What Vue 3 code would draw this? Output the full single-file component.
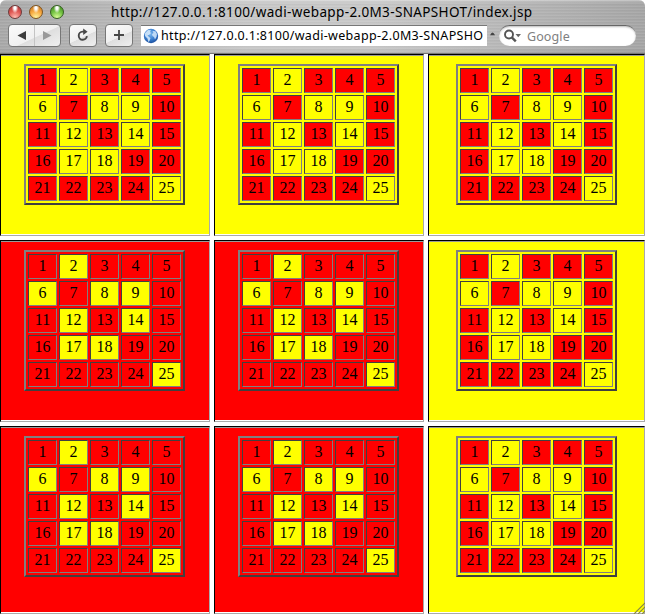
<script setup>
const litNumbers = new Set([2, 6, 8, 9, 12, 14, 17, 18, 25])
const cells = Array.from({ length: 25 }, (_, i) => i + 1)
const panes = ['yellow', 'yellow', 'yellow', 'red', 'red', 'yellow', 'red', 'red', 'yellow']
</script>

<template>
  <div class="window">
    <header class="chrome">
      <div class="titlebar">
        <div class="lights"><i class="light close"></i><i class="light mini"></i><i class="light zoom"></i></div>
        <div class="title">http://127.0.0.1:8100/wadi-webapp-2.0M3-SNAPSHOT/index.jsp</div>
      </div>
      <div class="toolbar">
        <div class="button history">
          <svg width="51" height="21" viewBox="0 0 51 21">
            <path d="M8.5 10.5L17 6V15Z" fill="#3c3c3c" />
            <path d="M25.5 0V21" stroke="#c4c4c4" />
            <path d="M42.5 10.5L34 6V15Z" fill="#999" />
          </svg>
        </div>
        <div class="button">
          <svg width="26" height="21" viewBox="0 0 26 21">
            <path d="M14 6.6H12.6A4.1 4.1 0 1 0 16.9 11.2" fill="none" stroke="#484848" stroke-width="1.9" />
            <path d="M13.2 3.4L17.6 6.7L13.2 10Z" fill="#484848" />
          </svg>
        </div>
        <div class="button">
          <svg width="26" height="21" viewBox="0 0 26 21"><path d="M13 5V15M8 10H18" stroke="#484848" stroke-width="1.8" /></svg>
        </div>
        <div class="address">
          <svg class="globe" width="16" height="16" viewBox="0 0 16 16">
            <defs>
              <radialGradient id="sea" cx="45%" cy="35%" r="65%">
                <stop offset="0" stop-color="#7db8ee" /><stop offset=".6" stop-color="#3a7fd0" /><stop offset="1" stop-color="#1c4f9e" />
              </radialGradient>
            </defs>
            <circle cx="8" cy="8" r="7.2" fill="url(#sea)" />
            <path d="M2 5L5 2L8 2.3L7 4L8 5L6 7L4.5 7.3L6 9L7.5 10L6.5 13L5.3 14L4.5 10.5L2 8Z" fill="#d9ebfb" opacity=".85" />
            <path d="M9.5 3L12.5 3.3L14 6L13.6 8.8L12 11.5L11 9L9.5 8L9 6L10.5 5Z" fill="#d4e8fb" opacity=".85" />
          </svg>
          <span class="url">http://127.0.0.1:8100/wadi-webapp-2.0M3-SNAPSHO</span>
        </div>
        <svg class="snap" width="5" height="4" viewBox="0 0 5 4"><path d="M0 3.2Q2.5 -2 5 3.2Z" fill="#444" /></svg>
        <div class="search">
          <svg width="18" height="14" viewBox="0 0 18 14">
            <circle cx="5" cy="5.5" r="4" fill="none" stroke="#555" stroke-width="1.9" />
            <path d="M7.8 8.4L11.8 12.4" stroke="#555" stroke-width="2.4" />
            <path d="M11.5 5H17L14.25 8.2Z" fill="#666" />
          </svg>
          <span>Google</span>
        </div>
      </div>
    </header>
    <main class="frames">
      <section v-for="(tone, p) in panes" :key="p" class="pane" :class="tone">
        <div class="grid">
          <div v-for="n in cells" :key="n" class="cell" :class="{ lit: litNumbers.has(n) }">{{ n }}</div>
        </div>
      </section>
      <svg class="grip" width="12" height="12" viewBox="0 0 12 12">
        <path d="M1 12L12 1M5 12L12 5M9 12L12 9" stroke="#8a8a40" stroke-width="1.1" />
      </svg>
    </main>
  </div>
</template>

<style>
body { margin: 0; background: #fff; }
</style>

<style scoped>
.window { width: 645px; height: 614px; overflow: hidden; position: relative; }
.chrome {
  height: 54px;
  box-sizing: border-box;
  border-radius: 6px 6px 0 0;
  border-bottom: 1px solid #777;
  font-family: "Noto Sans", sans-serif;
  background:
    repeating-linear-gradient(180deg, rgba(255,255,255,.07) 0 1px, rgba(0,0,0,.025) 1px 2px, transparent 2px 3px),
    linear-gradient(180deg, rgba(255,255,255,.35) 0, transparent 3px, transparent 48px, rgba(0,0,0,.08) 54px),
    linear-gradient(90deg, #a9a9a9, #c8c8c8 38%, #c8c8c8 58%, #a6a6a6);
}
.titlebar { display: flex; height: 24px; align-items: center; }
.lights { display: flex; gap: 7px; padding-left: 8px; width: 103px; box-sizing: border-box; flex: none; }
.light { width: 14px; height: 14px; border-radius: 50%; box-sizing: border-box; border: 1px solid #6b3a3a; flex: none; }
.close { background: radial-gradient(ellipse at 50% 14%, #fff 0 12%, transparent 38%), radial-gradient(circle at 50% 95%, #ffc0b5, #e05a56 50%, #a83030); }
.mini { border-color: #7d5420; background: radial-gradient(ellipse at 50% 14%, #fff 0 12%, transparent 38%), radial-gradient(circle at 50% 95%, #fff6a0, #f8a940 50%, #bd7020); }
.zoom { border-color: #355f20; background: radial-gradient(ellipse at 50% 14%, #fff 0 12%, transparent 38%), radial-gradient(circle at 50% 95%, #dcff98, #73c242 50%, #3c821f); }
.title { font-size: 13.5px; line-height: 22px; letter-spacing: .36px; white-space: nowrap; padding-left: 8px; color: #000; }
.toolbar { display: flex; padding-left: 8px; height: 24px; align-items: flex-start; }
.button {
  width: 28px; height: 23px; box-sizing: border-box; border: 1px solid #777; border-radius: 4px;
  background: linear-gradient(155deg, #fbfbfb, #f0f0f0 54%, #dedede 56%, #f0f0f0); margin-right: 8px; flex: none;
}
.button svg { display: block; }
.history { width: 53px; }
.address {
  width: 346px; height: 21px; margin-top: 1px; box-sizing: border-box; background: #fff; flex: none;
  border-top: 1px solid #777; display: flex; align-items: center; padding-left: 2px; overflow: hidden;
}
.globe { flex: none; }
.url { font-size: 12.5px; line-height: 20px; letter-spacing: .32px; margin-left: 2px; white-space: nowrap; }
.snap { margin: 8px 0 0 3px; flex: none; }
.search {
  width: 137px; height: 21px; box-sizing: border-box; margin: 1px 0 0 4px; border-radius: 11px; flex: none;
  background: #fff; border-top: 1px solid #666; box-shadow: inset 0 1px 2px #bbb;
  display: flex; align-items: center; gap: 5px; padding-left: 5px; color: #808080; font-size: 12.5px; line-height: 19px; letter-spacing: .1px;
}
.frames {
  display: grid; grid-template-columns: 210px 210px 217px; grid-template-rows: 182px 182px 188px; gap: 4px;
  background: #fff; position: relative;
}
.pane {
  box-sizing: border-box; border: 1px solid #aaa; border-top-color: #000; border-left-color: #000;
  padding: 9px 1px 0 0; display: flex; justify-content: center; align-items: flex-start;
  box-shadow: inset 0 1px #999, inset 0 -1px #fff;
}
.pane:nth-of-type(3n) { padding-right: 0; }
.yellow { background: #ff0; }
.red { background: #f00; }
.grid {
  display: grid; grid-template-columns: repeat(5, 29px); grid-auto-rows: 25px; gap: 2px; padding: 2px;
  border: 2px solid; border-color: #808080 #404040 #404040 #808080;
}
.cell {
  box-sizing: border-box; border: 1px solid; border-color: #404040 #808080 #808080 #404040;
  background: #f00; text-align: center; font: 16px/21px "Liberation Serif", serif; color: #000;
}
.lit { background: #ff0; }
.grip { position: absolute; right: 0; bottom: 0; }
</style>
